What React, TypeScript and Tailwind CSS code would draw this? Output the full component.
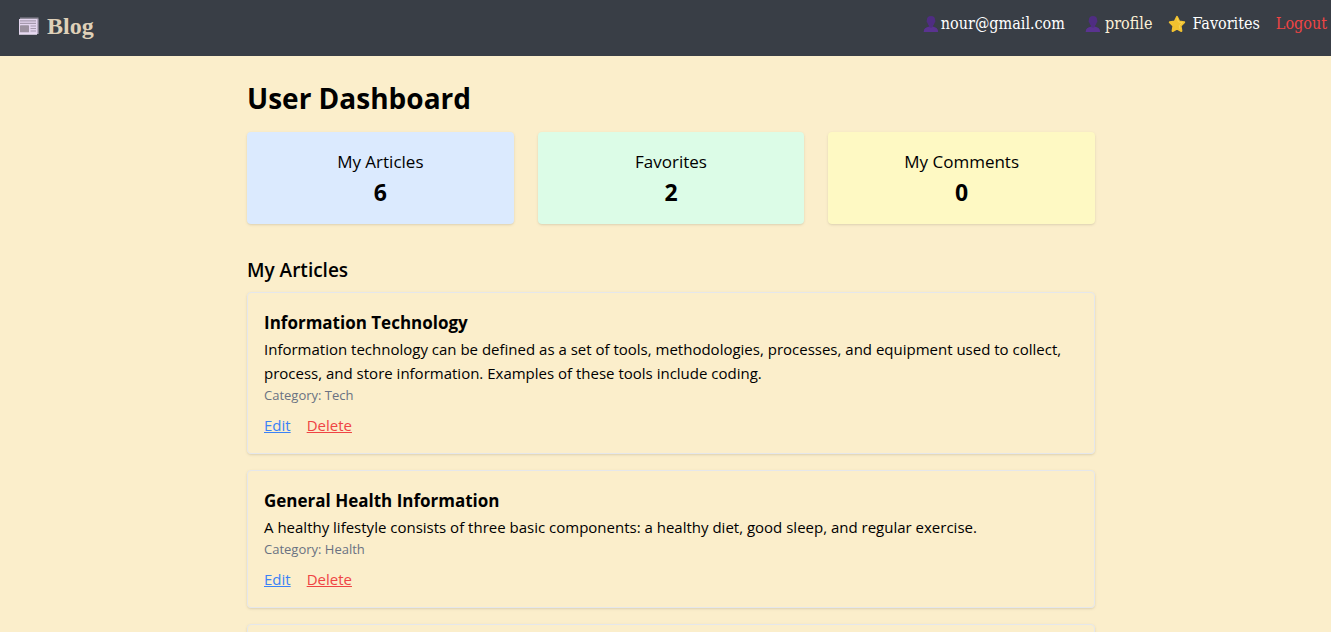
import React from "react";

type Stat = { label: string; value: number; tone: string };
type Article = { title: string; body: string; category: string };

const stats: Stat[] = [
  { label: "My Articles", value: 6, tone: "bg-[#dbeafe]" },
  { label: "Favorites", value: 2, tone: "bg-[#dcfce7]" },
  { label: "My Comments", value: 0, tone: "bg-[#fef9c3]" },
];

const articles: Article[] = [
  {
    title: "Information Technology",
    body: "Information technology can be defined as a set of tools, methodologies, processes, and equipment used to collect, process, and store information. Examples of these tools include coding.",
    category: "Tech",
  },
  {
    title: "General Health Information",
    body: "A healthy lifestyle consists of three basic components: a healthy diet, good sleep, and regular exercise.",
    category: "Health",
  },
];

function NewspaperIcon() {
  return (
    <svg viewBox="0 0 20 18" className="h-[18px] w-5" aria-hidden="true">
      <path d="M1 .5h18.5v16.5H18V2H1z" fill="#8f8a99" />
      <path d="M0 2h18v15.5H0z" fill="#e3d5ee" />
      <path d="M18 2h1.3v15H18z" fill="#b9adc4" />
      <path d="M1 3.3h16v1.2H1zM1 5.8h16V7H1z" fill="#a69aae" />
      <rect x="1" y="8.3" width="9" height="7" rx="0.6" fill="#9b919f" />
      <path d="M11.5 8.5H17v1h-5.500zM11.500 11H17v1h-5.500zM11.500 13.500H17v1h-5.500z" fill="#a69aae" />
      <path d="M0 16.700h18v.8H0z" fill="#f4eafa" />
    </svg>
  );
}

function PersonIcon() {
  return (
    <svg viewBox="0 0 16 16" className="size-4" aria-hidden="true">
      <path
        d="M8 0c2.600 0 4.100 1.600 4.100 4 0 .5.3.7.3 1.300 0 .8-.4 1.200-.8 1.500-.3 1.300-.8 2.200-1.600 2.900v1.100c2.900.7 5 1.800 5 5.200H.8c0-3.400 2.200-4.500 5.200-5.200V9.700c-.8-.7-1.300-1.600-1.600-2.900-.4-.3-.8-.7-.8-1.500 0-.6.3-.8.3-1.300C3.900 1.600 5.400 0 8 0z"
        fill="#4f2d82"
      />
      <path d="M6 10.800c1.200 1.300 2.800 1.300 4 0 2.900.7 5 1.800 5 5.200H.8c0-3.400 2.200-4.500 5.200-5.200z" fill="#5a3390" />
    </svg>
  );
}

function StarIcon() {
  return (
    <svg viewBox="0 0 18 18" className="size-[18px]" aria-hidden="true">
      <path
        d="M9 1.800l2.200 4.700 5 .8-3.600 3.600.8 5.100L9 13.600 4.600 16l.8-5.100L1.800 7.300l5-.8z"
        fill="#f2c230"
        stroke="#f2c230"
        strokeWidth="2"
        strokeLinejoin="round"
      />
      <path d="M9 3l1.500 4 4 .7-3.200 2.800.7 3.500" fill="none" stroke="#f8d352" strokeWidth="1" />
    </svg>
  );
}

function Navbar() {
  return (
    <nav className="flex h-14 items-center justify-between bg-[#393e46] pr-1 pb-1 pl-[19px] font-['DejaVu_Serif_Condensed','DejaVu_Serif',serif]">
      <a
        href="#"
        className="flex items-center gap-2 font-['Liberation_Serif',serif] text-2xl font-bold text-[#dfd0b8]"
      >
        <NewspaperIcon />
        Blog
      </a>
      <div className="flex items-center gap-4 pb-1 text-[16px] leading-6 text-white">
        <span className="flex items-center gap-0.5 pr-1">
          <PersonIcon />
          nour@gmail.com
        </span>
        <a href="#profile" className="flex items-center gap-1 text-[#fdf1d6]">
          <PersonIcon />
          profile
        </a>
        <a href="#favorites" className="flex items-center gap-1.5">
          <StarIcon />
          Favorites
        </a>
        <button type="button" className="text-[#ef4444]">
          Logout
        </button>
      </div>
    </nav>
  );
}

function StatCard({ label, value, tone }: Stat) {
  return (
    <div className={`rounded p-4 text-center shadow ${tone}`}>
      <p className="text-[17px] leading-7">{label}</p>
      <p className="text-[23px] leading-8 font-bold">{value}</p>
    </div>
  );
}

function ArticleCard({ title, body, category }: Article) {
  return (
    <article className="rounded border border-gray-200 p-4 shadow">
      <h3 className="text-[17px] leading-7 font-bold">{title}</h3>
      <p className="text-[15px] leading-6">{body}</p>
      <p className="text-[13px] leading-5 text-gray-500">Category: {category}</p>
      <div className="mt-2 flex gap-4 text-[15px] leading-6">
        <a href="#edit" className="text-[#3b82f6] underline">
          Edit
        </a>
        <button type="button" className="text-[#ef4444] underline">
          Delete
        </button>
      </div>
    </article>
  );
}

export default function App() {
  return (
    <div className="h-screen overflow-hidden bg-[#fbeecb] font-['Open_Sans','Noto_Sans',sans-serif] text-black">
      <Navbar />
      <div className="pl-[11px]">
        <main className="mx-auto max-w-4xl p-6">
          <h1 className="mb-4 text-[28px] leading-9 font-bold">User Dashboard</h1>
          <section className="mb-8 grid grid-cols-3 gap-6">
            {stats.map((s) => (
              <StatCard key={s.label} {...s} />
            ))}
          </section>
          <h2 className="mb-2 text-[19px] leading-7 font-semibold">My Articles</h2>
          <section className="flex flex-col gap-4">
            {articles.map((a) => (
              <ArticleCard key={a.title} {...a} />
            ))}
            <div className="h-36 rounded border border-gray-200 shadow" />
          </section>
        </main>
      </div>
    </div>
  );
}
